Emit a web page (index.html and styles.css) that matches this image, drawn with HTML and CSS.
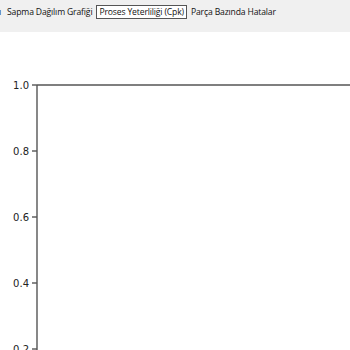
FILE: index.html
```html
<!DOCTYPE html>
<html lang="tr">
<head>
  <meta charset="UTF-8">
  <title>Proses Yeterliliği</title>
  <link rel="stylesheet" href="styles.css">
</head>
<body>
  <div class="tabbar">
    <span class="tab cut">ı</span>
    <span class="tab">Sapma Dağılım Grafiği</span>
    <span class="tab active">Proses Yeterliliği (Cpk)</span>
    <span class="tab">Parça Bazında Hatalar</span>
  </div>

  <div class="plot">
    <svg width="350" height="318" viewBox="0 0 350 318">
      <g class="spines">
        <line x1="37" y1="53" x2="350" y2="53" />
        <line x1="37" y1="53" x2="37" y2="318" />
      </g>
      <g class="ticks">
        <line x1="32" y1="53" x2="37" y2="53" />
        <line x1="32" y1="119" x2="37" y2="119" />
        <line x1="32" y1="185" x2="37" y2="185" />
        <line x1="32" y1="251" x2="37" y2="251" />
        <line x1="32" y1="317" x2="37" y2="317" />
      </g>
      <g class="labels">
        <text x="29" y="57">1.0</text>
        <text x="29" y="123">0.8</text>
        <text x="29" y="189">0.6</text>
        <text x="29" y="255">0.4</text>
        <text x="29" y="321">0.2</text>
      </g>
    </svg>
  </div>
</body>
</html>
```

FILE: styles.css
```css
html, body {
  margin: 0;
  padding: 0;
  background-color: white;
}

.tabbar {
  height: 32px;
  background-color: #f0f0f0;
  display: flex;
  align-items: flex-start;
  padding-top: 5px;
  box-sizing: border-box;
  font-family: 'Open Sans', sans-serif;
  font-size: 8.6px;
  letter-spacing: -0.15px;
  color: #111;
  white-space: nowrap;
  overflow: hidden;
}

.tab {
  padding: 0 2px;
  border: 1px solid transparent;
  line-height: 12px;
}

.tab.cut {
  margin-left: -4px;
  padding-right: 2px;
}

.tab.active {
  border-color: #555;
  background-color: white;
  margin: 0 1px;
}

.plot svg {
  display: block;
}

.spines line,
.ticks line {
  stroke: #555;
  stroke-width: 1.4;
}

.labels text {
  font-family: 'DejaVu Sans', sans-serif;
  font-size: 10px;
  fill: #222;
  text-anchor: end;
}
```
